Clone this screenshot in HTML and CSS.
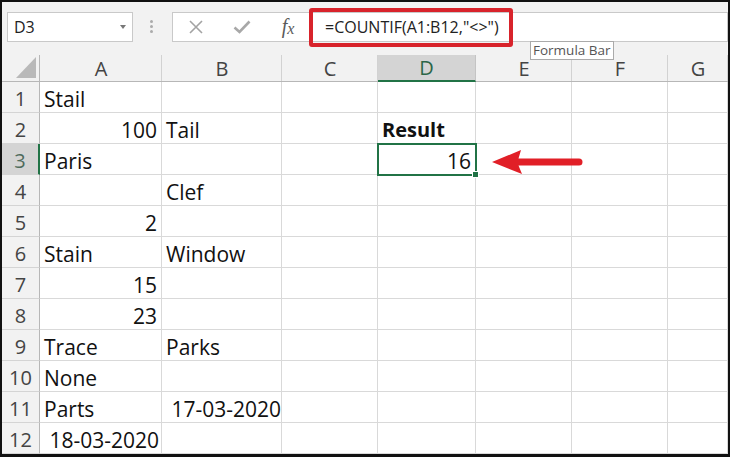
FILE: index.html
```html
<!DOCTYPE html>
<html lang="en">
<head>
    <meta charset="UTF-8">
    <meta name="viewport" content="width=device-width, initial-scale=1.0">
    <title>COUNTIF not blank</title>
    <link rel="stylesheet" href="styles.css">
</head>
<body>
    <div class="window">
        <div class="toolbar">
            <div class="name-box">
                <span>D3</span>
                <span class="caret"></span>
            </div>
            <div class="grip"><i></i><i></i><i></i></div>
            <div class="formula-bar">
                <span class="fx-btn">
                    <svg width="16" height="14" viewBox="0 0 16 14"><path d="M2 1 L14 13 M14 1 L2 13" stroke="#a3a3a3" stroke-width="1.6" fill="none"/></svg>
                </span>
                <span class="fx-btn">
                    <svg width="18" height="14" viewBox="0 0 18 14"><path d="M1.5 7.5 L6.5 12 L16.5 1.5" stroke="#a8a8a8" stroke-width="2.6" fill="none"/></svg>
                </span>
                <span class="fx-btn fx">f<span class="x">x</span></span>
                <span class="formula">=COUNTIF(A1:B12,"&lt;&gt;")</span>
            </div>
        </div>

        <div class="sheet">
            <div class="corner"><span class="tri"></span></div>
            <div class="col-head">A</div>
            <div class="col-head">B</div>
            <div class="col-head">C</div>
            <div class="col-head selected">D</div>
            <div class="col-head">E</div>
            <div class="col-head">F</div>
            <div class="col-head">G</div>

            <div class="row-head">1</div>
            <div class="cell">Stail</div><div class="cell"></div><div class="cell"></div><div class="cell"></div><div class="cell"></div><div class="cell"></div><div class="cell"></div>

            <div class="row-head">2</div>
            <div class="cell num">100</div><div class="cell">Tail</div><div class="cell"></div><div class="cell bold">Result</div><div class="cell"></div><div class="cell"></div><div class="cell"></div>

            <div class="row-head selected">3</div>
            <div class="cell">Paris</div><div class="cell"></div><div class="cell"></div><div class="cell num active">16</div><div class="cell"></div><div class="cell"></div><div class="cell"></div>

            <div class="row-head">4</div>
            <div class="cell"></div><div class="cell">Clef</div><div class="cell"></div><div class="cell"></div><div class="cell"></div><div class="cell"></div><div class="cell"></div>

            <div class="row-head">5</div>
            <div class="cell num">2</div><div class="cell"></div><div class="cell"></div><div class="cell"></div><div class="cell"></div><div class="cell"></div><div class="cell"></div>

            <div class="row-head">6</div>
            <div class="cell">Stain</div><div class="cell">Window</div><div class="cell"></div><div class="cell"></div><div class="cell"></div><div class="cell"></div><div class="cell"></div>

            <div class="row-head">7</div>
            <div class="cell num">15</div><div class="cell"></div><div class="cell"></div><div class="cell"></div><div class="cell"></div><div class="cell"></div><div class="cell"></div>

            <div class="row-head">8</div>
            <div class="cell num">23</div><div class="cell"></div><div class="cell"></div><div class="cell"></div><div class="cell"></div><div class="cell"></div><div class="cell"></div>

            <div class="row-head">9</div>
            <div class="cell">Trace</div><div class="cell">Parks</div><div class="cell"></div><div class="cell"></div><div class="cell"></div><div class="cell"></div><div class="cell"></div>

            <div class="row-head">10</div>
            <div class="cell">None</div><div class="cell"></div><div class="cell"></div><div class="cell"></div><div class="cell"></div><div class="cell"></div><div class="cell"></div>

            <div class="row-head">11</div>
            <div class="cell">Parts</div><div class="cell"> 17-03-2020</div><div class="cell"></div><div class="cell"></div><div class="cell"></div><div class="cell"></div><div class="cell"></div>

            <div class="row-head">12</div>
            <div class="cell"> 18-03-2020</div><div class="cell"></div><div class="cell"></div><div class="cell"></div><div class="cell"></div><div class="cell"></div><div class="cell"></div>
        </div>

        <!-- annotations drawn over the screenshot -->
        <div class="callout"></div>
        <div class="tooltip">Formula Bar</div>
        <svg class="arrow" width="100" height="36" viewBox="0 0 100 36">
            <path d="M4 18 L33 6 L30.5 14.5 L91 14.5 A3.5 3.5 0 0 1 91 21.5 L30.5 21.5 L34 30 Z" fill="#e11f27"/>
        </svg>
    </div>
</body>
</html>
```

FILE: styles.css
```css
body {
    margin: 0;
    padding: 0;
    background: #fff;
}

.window {
    position: relative;
    width: 730px;
    height: 457px;
    box-sizing: border-box;
    border: 2px solid #111;
    border-bottom-width: 3px;
    overflow: hidden;
    font-family: 'Open Sans', sans-serif;
    background: #fff;
}

/* top strip with name box and formula bar */
.toolbar {
    height: 53px;
    box-sizing: border-box;
    padding: 10px 0 0 5px;
    display: flex;
    align-items: flex-start;
    background: #f2f2f2;
}

.name-box {
    width: 126px;
    height: 30px;
    box-sizing: border-box;
    border: 1px solid #c9c9c9;
    background: #fff;
    display: flex;
    align-items: center;
    justify-content: space-between;
    padding: 0 6px 0 6px;
    font-size: 16px;
    color: #222;
}

.caret {
    width: 0;
    height: 0;
    border-left: 3.5px solid transparent;
    border-right: 3.5px solid transparent;
    border-top: 4px solid #777;
}

.grip {
    display: flex;
    flex-direction: column;
    gap: 2px;
    margin: 8px 19px 0 17px;
}

.grip i {
    display: block;
    width: 3px;
    height: 3px;
    border-radius: 50%;
    background: #ababab;
}

.formula-bar {
    flex: 1;
    height: 30px;
    box-sizing: border-box;
    border: 1px solid #c9c9c9;
    background: #fff;
    display: flex;
    align-items: center;
}

.fx-btn {
    width: 46px;
    height: 100%;
    display: flex;
    align-items: center;
    justify-content: center;
}

.fx {
    font-family: 'Liberation Serif', serif;
    font-style: italic;
    font-size: 20px;
    color: #5a5a5a;
    padding-bottom: 2px;
}

.fx .x {
    font-size: 16px;
    margin-top: 5px;
}

.formula {
    padding-left: 14px;
    font-size: 16px;
    color: #222;
}

/* the worksheet */
.sheet {
    display: grid;
    grid-template-columns: 38px 122px 120px 96px 98px 96px 96px 1fr;
    grid-template-rows: 27px repeat(12, 31px);
    font-size: 20px;
}

.corner,
.col-head,
.row-head {
    background: #f2f2f2;
    color: #444;
    display: flex;
    align-items: center;
    justify-content: center;
    box-sizing: border-box;
}

.corner {
    align-items: flex-end;
    justify-content: flex-end;
    padding: 0 3px 3px 0;
    border-right: 1px solid #b7b7b7;
    border-bottom: 1px solid #b7b7b7;
}

.tri {
    width: 0;
    height: 0;
    border-left: 20px solid transparent;
    border-bottom: 21px solid #b9b9b9;
}

.col-head {
    border-bottom: 1px solid #b7b7b7;
    background-image: linear-gradient(#d2d2d2, #d2d2d2);
    background-size: 1px 100%;
    background-repeat: no-repeat;
    background-position: right 0 top 0;
}

.col-head.selected {
    background: #d4d4d4;
    border-bottom: 2px solid #217346;
    color: #2b6647;
    border-right: 1px solid #c4c4c4;
}

.row-head {
    border-right: 1px solid #b7b7b7;
    border-bottom: 1px solid #d4d4d4;
    padding-top: 2px;
}

.row-head.selected {
    background: #d4d4d4;
    border-right: 2px solid #217346;
    color: #4f6b5c;
}

.cell {
    box-sizing: border-box;
    border-right: 1px solid #d9d9d9;
    border-bottom: 1px solid #d9d9d9;
    display: flex;
    align-items: center;
    padding: 3px 4px 0 4px;
    white-space: pre;
    font-size: 21px;
    color: #111;
}

.num {
    justify-content: flex-end;
}

.bold {
    font-weight: bold;
    font-size: 20px;
}

.active {
    position: relative;
    outline: 2px solid #217346;
    outline-offset: -1px;
}

.active::after {
    content: "";
    position: absolute;
    right: -4px;
    bottom: -4px;
    width: 5px;
    height: 5px;
    background: #217346;
    border: 1px solid #fff;
}

/* overlays */
.callout {
    position: absolute;
    left: 307px;
    top: 6px;
    width: 204px;
    height: 39px;
    box-sizing: border-box;
    border: 4px solid #d8232b;
    border-radius: 3px;
}

.tooltip {
    position: absolute;
    left: 528px;
    top: 39px;
    height: 19px;
    box-sizing: border-box;
    padding: 0 2px;
    border: 1px solid #aaa;
    background: #fff;
    font-size: 13.5px;
    line-height: 16px;
    color: #555;
}

.arrow {
    position: absolute;
    left: 486px;
    top: 142px;
}
```
